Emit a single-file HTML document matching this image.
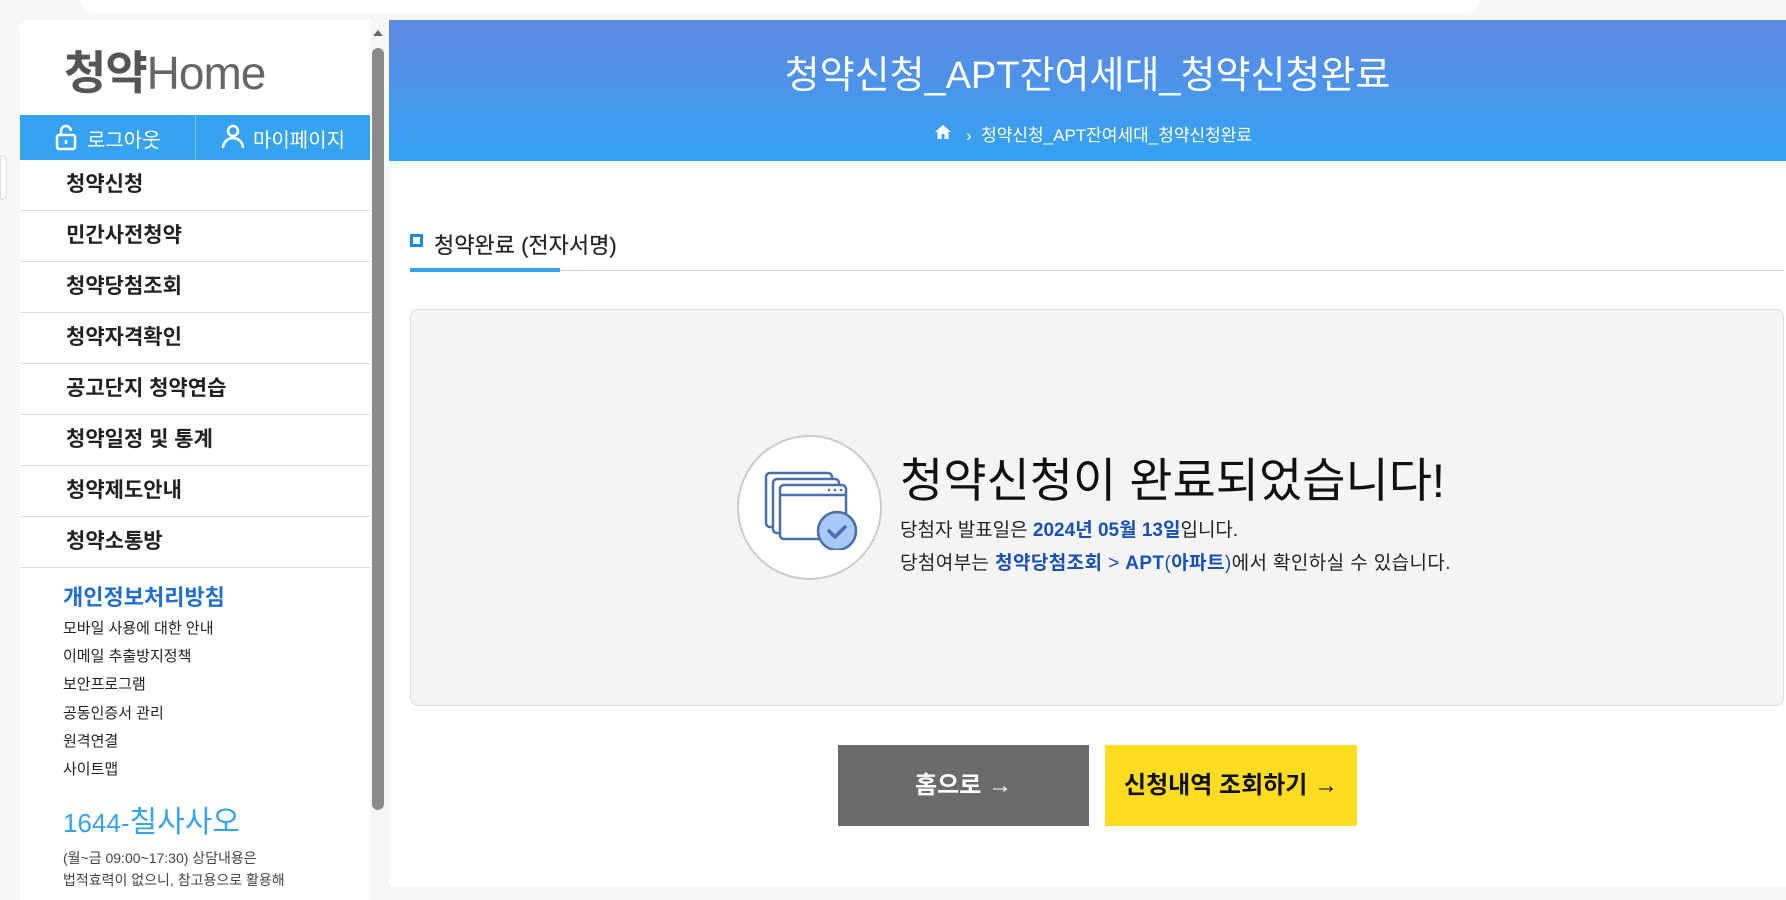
<!DOCTYPE html>
<html><head><meta charset="utf-8"><style>
*{margin:0;padding:0;box-sizing:border-box}
body{width:1786px;height:886px;overflow:hidden;background:#f7f7f7;font-family:"Liberation Sans","Noto Sans CJK KR",sans-serif;position:relative}
.abs{position:absolute}
.side{left:20px;top:20px;width:350px;height:880px;background:#fff;border-radius:8px 0 0 0}
.menu{left:20px;width:350px;height:51px;border-bottom:1px solid #ddd;font-size:21px;font-weight:bold;color:#222;padding-left:46px;line-height:50px}
.sm{left:63px;font-size:15px;color:#222}
</style></head><body>
<div class="abs" style="left:0;top:0;width:1786px;height:14px;background:#f7f7f7"></div>
<div class="abs" style="left:80px;top:-20px;width:1400px;height:33px;background:#fff;border-radius:16px"></div>
<div class="abs" style="left:0;top:155px;width:7px;height:45px;background:#fff;border-radius:0 6px 6px 0;border:1px solid #ddd"></div>
<div class="abs side"></div>
<div class="abs" style="left:64px;top:48px;font-size:46px;color:#666;letter-spacing:-1px;line-height:50px"><span style="color:#555;font-weight:bold">청약</span>Home</div>
<div class="abs" style="left:20px;top:115px;width:350px;height:45px;background:#35a3f0"></div>
<div class="abs" style="left:195px;top:115px;width:1px;height:45px;background:#7cc4f6"></div>
<svg class="abs" style="left:54px;top:124px" width="26" height="28" viewBox="0 0 26 28"><rect x="3" y="11" width="18" height="14" rx="2" fill="none" stroke="#fff" stroke-width="2.5"/><path d="M7 11V7a5 5 0 0 1 10 0" fill="none" stroke="#fff" stroke-width="2.5"/><path d="M12 16v4" stroke="#fff" stroke-width="2.5"/></svg>
<div class="abs" style="left:87px;top:124px;font-size:20px;color:#fff">로그아웃</div>
<svg class="abs" style="left:220px;top:123px" width="26" height="28" viewBox="0 0 26 28"><circle cx="13" cy="8" r="5" fill="none" stroke="#fff" stroke-width="2.5"/><path d="M3 25a10 10 0 0 1 20 0" fill="none" stroke="#fff" stroke-width="2.5"/></svg>
<div class="abs" style="left:253px;top:124px;font-size:20px;color:#fff">마이페이지</div>
<div class="abs menu" style="top:160px">청약신청</div>
<div class="abs menu" style="top:211px">민간사전청약</div>
<div class="abs menu" style="top:262px">청약당첨조회</div>
<div class="abs menu" style="top:313px">청약자격확인</div>
<div class="abs menu" style="top:364px">공고단지 청약연습</div>
<div class="abs menu" style="top:415px">청약일정 및 통계</div>
<div class="abs menu" style="top:466px">청약제도안내</div>
<div class="abs menu" style="top:517px">청약소통방</div>
<div class="abs" style="left:63px;top:580px;font-size:22px;font-weight:bold;color:#1f6fd0">개인정보처리방침</div>
<div class="abs sm" style="top:617px">모바일 사용에 대한 안내</div>
<div class="abs sm" style="top:645px">이메일 추출방지정책</div>
<div class="abs sm" style="top:673px">보안프로그램</div>
<div class="abs sm" style="top:702px">공동인증서 관리</div>
<div class="abs sm" style="top:730px">원격연결</div>
<div class="abs sm" style="top:758px">사이트맵</div>
<div class="abs" style="left:63px;top:804px;font-size:30px;color:#35a3f0;line-height:38px"><span style="font-size:26px">1644-</span>칠사사오</div>
<div class="abs sm" style="top:848px;font-size:14px;color:#444">(월~금 09:00~17:30) 상담내용은</div>
<div class="abs sm" style="top:870px;font-size:14px;color:#444">법적효력이 없으니, 참고용으로 활용해</div>
<div class="abs" style="left:372px;top:48px;width:12px;height:762px;background:#8a8a8a;border-radius:6px"></div>
<div class="abs" style="left:373px;top:30px;width:0;height:0;border-left:5px solid transparent;border-right:5px solid transparent;border-bottom:6px solid #666"></div>
<div class="abs" style="left:389px;top:20px;width:1397px;height:141px;background:linear-gradient(#6088e3,#33a3f2)"></div>
<div class="abs" style="left:389px;top:44px;width:1397px;text-align:center;font-size:38px;color:#fff">청약신청_APT잔여세대_청약신청완료</div>
<svg class="abs" style="left:934px;top:124px" width="18" height="16" viewBox="0 0 18 16"><path d="M9 1L1 8h2.5v7h4v-5h3v5h4V8H17z" fill="#fff"/></svg>
<div class="abs" style="left:966px;top:121px;font-size:17px;color:#fff">›&nbsp;&nbsp;청약신청_APT잔여세대_청약신청완료</div>
<div class="abs" style="left:389px;top:161px;width:1397px;height:725px;background:#fff"></div>
<div class="abs" style="left:410px;top:234px;width:13px;height:13px;border:3px solid #1e8ae8"></div>
<div class="abs" style="left:434px;top:228px;font-size:22px;color:#222;-webkit-text-stroke:0.2px #222">청약완료 (전자서명)</div>
<div class="abs" style="left:410px;top:270px;width:1374px;height:1px;background:#ccc"></div>
<div class="abs" style="left:410px;top:268px;width:150px;height:4px;background:#35a3f0"></div>
<div class="abs" style="left:410px;top:309px;width:1374px;height:397px;background:#f4f4f4;border:1px solid #ddd;border-radius:8px"></div>
<div class="abs" style="left:737px;top:435px;width:145px;height:145px;border-radius:50%;background:#fff;border:2px solid #ccc"></div>
<svg class="abs" style="left:764px;top:470px" width="94" height="80" viewBox="0 0 94 80"><g fill="#fff" stroke="#4a6ea8" stroke-width="2.5"><rect x="2" y="3" width="66" height="54" rx="4"/><rect x="9" y="9" width="66" height="54" rx="4"/><rect x="16" y="15" width="66" height="54" rx="4"/></g><path d="M16 25h66" stroke="#4a6ea8" stroke-width="2.5"/><g fill="#4a6ea8"><circle cx="65" cy="20" r="1.3"/><circle cx="71" cy="20" r="1.3"/><circle cx="77" cy="20" r="1.3"/></g><circle cx="73" cy="61" r="19" fill="#a9c8f8" stroke="#4a6ea8" stroke-width="2.5"/><path d="M65 61l6 6 10-10" fill="none" stroke="#4a6ea8" stroke-width="3.5" stroke-linecap="round" stroke-linejoin="round"/></svg>
<div class="abs" style="left:900px;top:442px;font-size:47px;color:#111">청약신청이 완료되었습니다!</div>
<div class="abs" style="left:900px;top:515px;font-size:19px;color:#222">당첨자 발표일은 <b style="color:#1a4fb5">2024년 05월 13일</b>입니다.</div>
<div class="abs" style="left:900px;top:548px;font-size:19px;color:#222;letter-spacing:0.4px">당첨여부는 <b style="color:#1a4fb5">청약당첨조회 <span style="font-weight:normal">&gt;</span> APT<span style="font-weight:normal">(</span>아파트<span style="font-weight:normal">)</span></b>에서 확인하실 수 있습니다.</div>
<div class="abs" style="left:838px;top:745px;width:251px;height:81px;background:#6b6b6b;color:#fff;font-size:24px;font-weight:bold;text-align:center;line-height:81px">홈으로 →</div>
<div class="abs" style="left:1105px;top:745px;width:252px;height:81px;background:#fddc22;color:#111;font-size:24px;font-weight:bold;text-align:center;line-height:81px">신청내역 조회하기 →</div>
</body></html>
